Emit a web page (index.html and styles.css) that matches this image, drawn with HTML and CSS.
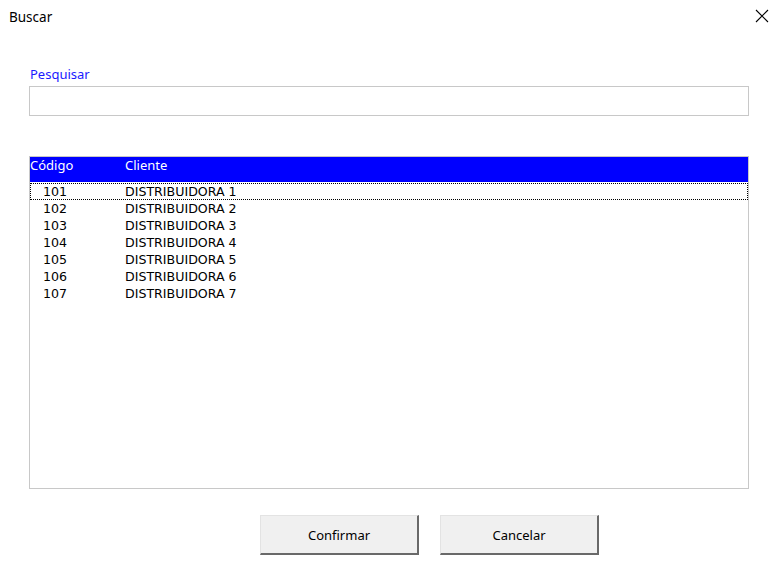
FILE: index.html
```html
<!DOCTYPE html>
<html lang="pt-BR">
<head>
    <meta charset="UTF-8">
    <title>Buscar</title>
    <link rel="stylesheet" href="styles.css">
</head>
<body>
    <div class="dialog">
        <div class="titlebar">
            <span class="title">Buscar</span>
            <button class="close" aria-label="Fechar">
                <svg width="14" height="14" viewBox="0 0 14 14">
                    <path d="M1 1 L13 13 M13 1 L1 13" stroke="#000" stroke-width="1.1" fill="none"/>
                </svg>
            </button>
        </div>

        <div class="content">
            <label class="label" for="pesquisa">Pesquisar</label>
            <input class="search" id="pesquisa" type="text">

            <div class="listbox">
                <div class="list-header">
                    <span class="col-code">Código</span>
                    <span class="col-client">Cliente</span>
                </div>
                <div class="list-body">
                    <div class="row focused"><span class="col-code">101</span><span class="col-client">DISTRIBUIDORA 1</span></div>
                    <div class="row"><span class="col-code">102</span><span class="col-client">DISTRIBUIDORA 2</span></div>
                    <div class="row"><span class="col-code">103</span><span class="col-client">DISTRIBUIDORA 3</span></div>
                    <div class="row"><span class="col-code">104</span><span class="col-client">DISTRIBUIDORA 4</span></div>
                    <div class="row"><span class="col-code">105</span><span class="col-client">DISTRIBUIDORA 5</span></div>
                    <div class="row"><span class="col-code">106</span><span class="col-client">DISTRIBUIDORA 6</span></div>
                    <div class="row"><span class="col-code">107</span><span class="col-client">DISTRIBUIDORA 7</span></div>
                </div>
            </div>

            <div class="actions">
                <button class="btn">Confirmar</button>
                <button class="btn">Cancelar</button>
            </div>
        </div>
    </div>
</body>
</html>
```

FILE: styles.css
```css
* {
    margin: 0;
    padding: 0;
    box-sizing: border-box;
}

body {
    background: #fff;
    font-family: "Noto Sans", "Open Sans", sans-serif;
    color: #000;
    width: 782px;
    height: 587px;
    overflow: hidden;
}

.titlebar {
    height: 34px;
    display: flex;
    justify-content: space-between;
    align-items: flex-start;
    padding: 8px 13px 0 9px;
}

.title {
    font-size: 13.5px;
    line-height: 18px;
}

.close {
    border: none;
    background: none;
    width: 14px;
    height: 14px;
    margin-top: 1px;
}

.close svg {
    display: block;
}

.content {
    padding: 31px 0 0 29px;
    width: 749px;
}

.label {
    display: block;
    color: #1a1aff;
    font-size: 13px;
    line-height: 18px;
    padding-left: 1px;
    height: 21px;
}

.search {
    display: block;
    width: 720px;
    height: 30px;
    border: 1px solid #c8c8c8;
    outline: none;
}

.listbox {
    margin-top: 40px;
    width: 720px;
    height: 333px;
    border: 1px solid #c8c8c8;
}

.list-header {
    background: #0000ff;
    color: #fff;
    height: 25px;
    display: flex;
    font-size: 13px;
    line-height: 17px;
}

.list-header .col-code {
    width: 95px;
}

.list-body {
    padding-top: 1px;
    font-family: "DejaVu Sans", sans-serif;
    font-size: 12.6px;
}

.row {
    display: flex;
    height: 17px;
    line-height: 15px;
    color: #000;
    border: 1px dotted transparent;
}

.row.focused {
    border: 1px dotted #000;
}

.row .col-code {
    width: 94px;
    padding-left: 12px;
}

.actions {
    display: flex;
    gap: 21px;
    margin-top: 26px;
    padding-left: 231px;
}

.btn {
    width: 159px;
    height: 40px;
    background: #f0f0f0;
    border-top: 1px solid #e3e3e3;
    border-left: 1px solid #e3e3e3;
    border-right: 2px solid #696969;
    border-bottom: 2px solid #696969;
    font-family: "Noto Sans", "Open Sans", sans-serif;
    font-size: 13px;
    color: #000;
}
```
